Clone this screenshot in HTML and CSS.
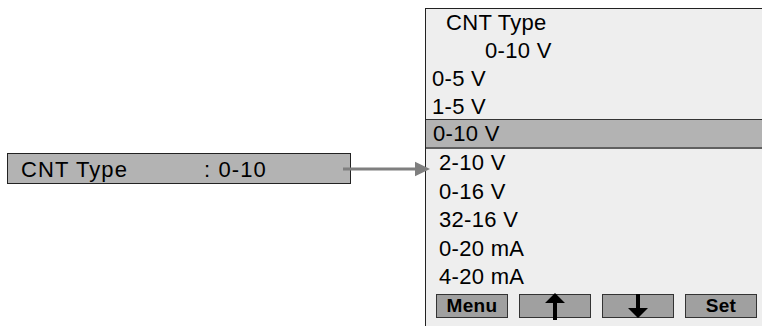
FILE: index.html
```html
<!DOCTYPE html>
<html>
<head>
	<title>CNT Type</title>
	<link rel="stylesheet" href="styles.css">
</head>
<body>
	<div class="scene">
		<div class="field"><span class="name">CNT Type</span><span class="val">: 0-10</span></div>

		<div class="panel">
			<div class="title">CNT Type</div>
			<div class="current">0-10 V</div>
			<div class="opt">0-5 V</div>
			<div class="opt">1-5 V</div>
			<div class="opt sel">0-10 V</div>
			<div class="opt low">2-10 V</div>
			<div class="opt low">0-16 V</div>
			<div class="opt low">32-16 V</div>
			<div class="opt low">0-20 mA</div>
			<div class="opt low">4-20 mA</div>
			<div class="keys">
				<div class="key">Menu</div>
				<div class="key">
					<svg class="up" width="20" height="28" viewBox="0 0 20 28">
						<polygon points="10,0 20,10 12,10 12,27 8,27 8,10 0,10" fill="#000"/>
					</svg>
				</div>
				<div class="key">
					<svg class="down" width="20" height="24" viewBox="0 0 20 24">
						<polygon points="8,0 12,0 12,14 20,14 10,24 0,14 8,14" fill="#000"/>
					</svg>
				</div>
				<div class="key">Set</div>
			</div>
		</div>

		<!-- arrow from the field to the list -->
		<svg class="link" width="90" height="18" viewBox="0 0 90 18">
			<line x1="0" y1="9" x2="74" y2="9" stroke="#7f7f7f" stroke-width="3"/>
			<polygon points="72,1.7 87,9 72,16.3" fill="#7f7f7f"/>
		</svg>
	</div>
</body>
</html>
```

FILE: styles.css
```css
body {
	margin: 0;
	overflow: hidden;
	background: #fff;
	font-family: "Liberation Sans", Arial, sans-serif;
	color: #000;
}

.scene {
	position: relative;
	display: flex;
	align-items: flex-start;
	padding-top: 8px;
	width: 762px;
	height: 318px;
}

.field {
	flex: none;
	display: flex;
	margin-top: 145px;
	margin-left: 7px;
	width: 329px;
	height: 27px;
	padding: 2px 0 0 13px;
	line-height: 27px;
	font-size: 22px;
	letter-spacing: 1.1px;
	background: #b3b3b3;
	border: 1px solid #222;
}

.name {
	width: 183px;
}

.panel {
	flex: none;
	margin-left: 74px;
	width: 345px;
	height: 330px;
	background: #eeeeee;
	border-top: 1px solid #222;
	border-left: 1px solid #222;
	font-size: 22px;
	letter-spacing: 0.3px;
}

.title {
	line-height: 28px;
	padding-left: 20px;
}

.current {
	line-height: 28px;
	padding-left: 59px;
}

.opt {
	line-height: 28px;
	padding-left: 6px;
}

.sel {
	margin-top: -2px;
	line-height: 27px;
	padding-left: 7px;
	background: #b3b3b3;
	border-top: 1px solid #333;
	border-bottom: 2px solid #606060;
}

.low {
	line-height: 28.5px;
	padding-left: 13px;
}

.keys {
	display: flex;
	gap: 11px;
	margin-top: 2.5px;
	padding-left: 10px;
}

.key {
	display: flex;
	justify-content: center;
	align-items: center;
	width: 70px;
	height: 22px;
	background: #a0a0a0;
	border: 1px solid #333;
	font-size: 19px;
	font-weight: bold;
	letter-spacing: 0.3px;
}

.key svg {
	display: block;
	align-self: flex-start;
	overflow: visible;
}

.up {
	margin-top: -2px;
}

.down {
	margin-top: -1px;
}

.link {
	position: absolute;
	left: 343px;
	top: 160px;
}
```
